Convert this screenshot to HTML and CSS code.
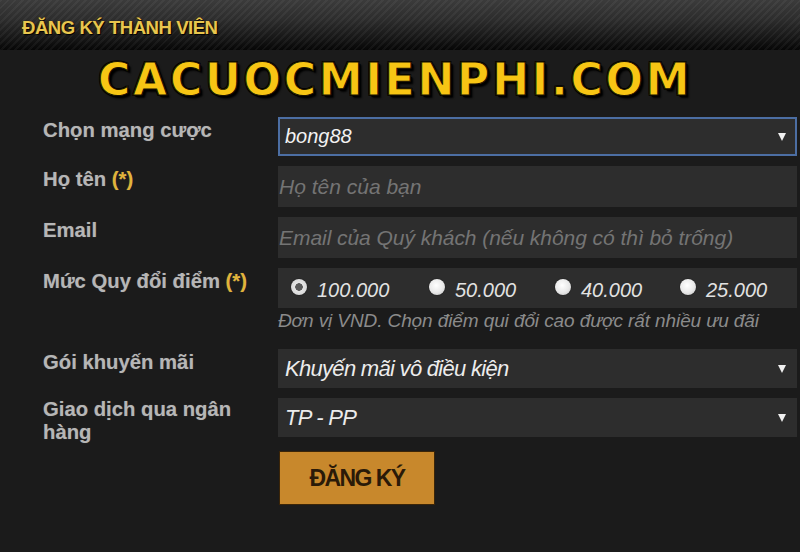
FILE: index.html
```html
<!DOCTYPE html>
<html lang="vi">
<head>
<meta charset="utf-8">
<title>Đăng ký thành viên</title>
<link rel="stylesheet" href="styles.css">
</head>
<body>
<div class="page">
  <div class="header">
    <h1 class="header-title">ĐĂNG KÝ THÀNH VIÊN</h1>
  </div>
  <div class="brand">CACUOCMIENPHI.COM</div>
  <form class="form">
    <div class="row">
      <label class="label">Chọn mạng cược</label>
      <div class="field select focused"><span class="value">bong88</span><span class="arrow"></span></div>
    </div>
    <div class="row">
      <label class="label">Họ tên <span class="req">(*)</span></label>
      <div class="field input"><span class="ph">Họ tên của bạn</span></div>
    </div>
    <div class="row">
      <label class="label">Email</label>
      <div class="field input"><span class="ph ph-email">Email của Quý khách (nếu không có thì bỏ trống)</span></div>
    </div>
    <div class="row">
      <label class="label">Mức Quy đổi điểm <span class="req">(*)</span></label>
      <div class="col">
        <div class="field radios">
          <span class="opt opt1"><span class="radio checked"></span>100.000</span>
          <span class="opt opt2"><span class="radio"></span>50.000</span>
          <span class="opt opt3"><span class="radio"></span>40.000</span>
          <span class="opt"><span class="radio"></span>25.000</span>
        </div>
        <div class="hint">Đơn vị VND. Chọn điểm qui đổi cao được rất nhiều ưu đãi</div>
      </div>
    </div>
    <div class="row row-promo">
      <label class="label">Gói khuyến mãi</label>
      <div class="field select short"><span class="value narrow">Khuyến mãi vô điều kiện</span><span class="arrow"></span></div>
    </div>
    <div class="row">
      <label class="label label-wrap">Giao dịch qua ngân hàng</label>
      <div class="field select short"><span class="value narrow">TP - PP</span><span class="arrow"></span></div>
    </div>
    <div class="row row-btn">
      <div class="label"></div>
      <button type="button" class="btn">ĐĂNG KÝ</button>
    </div>
  </form>
</div>
</body>
</html>
```
FILE: styles.css
```css
* { box-sizing: border-box; }
html, body { margin: 0; padding: 0; }
body {
  background: #1b1b1b;
  font-family: "Liberation Sans", Arial, sans-serif;
  width: 800px;
  height: 552px;
  overflow: hidden;
}
.page { width: 800px; height: 552px; background: #1b1b1b; }
.header {
  height: 50px;
  display: flex;
  align-items: center;
  padding-left: 22px;
  background:
    repeating-linear-gradient(135deg, rgba(255,255,255,0.045) 0 2px, rgba(0,0,0,0) 2px 5px),
    linear-gradient(180deg, #3b3b3b 0%, #2c2c2c 40%, #141414 80%, #060606 100%);
}
.header-title {
  margin: 0;
  padding-top: 6px;
  font-size: 18.6px;
  font-weight: bold;
  letter-spacing: -0.5px;
  color: #e9c64e;
  text-shadow: 1px 1px 1px #000, -1px 0 1px #3a2a00;
}
.brand {
  height: 60px;
  padding-left: 98px;
  padding-top: 5px;
  font-family: "DejaVu Sans", sans-serif;
  font-weight: bold;
  font-size: 44px;
  letter-spacing: 2.8px;
  color: #f7c514;
  -webkit-text-stroke: 1px #1a1300;
  text-shadow: 2px 2px 0 #000, -1px -1px 0 #000, 1px -1px 0 #000, -1px 1px 0 #000, 3px 3px 2px #000;
  line-height: 50px;
}
.form {
  margin: 0;
  padding: 7px 3px 0 43px;
  display: flex;
  flex-direction: column;
  gap: 10px;
}
.row { display: flex; align-items: flex-start; }
.label {
  width: 235px;
  flex: none;
  font-size: 20.3px;
  font-weight: bold;
  color: #b6b6b6;
  line-height: 23px;
  padding-top: 2px;
  text-shadow: 0 0 1px #555;
}
.label-wrap { padding-right: 30px; padding-top: 0; margin-bottom: -7px; }
.req { color: #e2b437; }
.field {
  width: 519px;
  height: 41px;
  background: #2d2d2d;
  display: flex;
  align-items: center;
  font-style: italic;
  font-size: 20px;
  position: relative;
}
.short { height: 39px; }
.select { padding: 0 11px 0 7px; justify-content: space-between; }
.focused { border: 2px solid #4c6ea3; height: 39px; padding-left: 5px; padding-right: 9px; }
.value { color: #f2f2f2; }
.narrow { font-size: 22px; letter-spacing: -0.7px; color: #ececec; }
.arrow {
  width: 0; height: 0;
  border-left: 4.5px solid transparent;
  border-right: 4.5px solid transparent;
  border-top: 8px solid #f0f0f0;
}
.input { padding-left: 1px; }
.ph { color: #747474; font-size: 21px; }
.ph-email { letter-spacing: -0.05px; }
.col { display: flex; flex-direction: column; }
.radios { padding-left: 13px; padding-top: 4px; color: #e2e2e2; height: 40px; }
.opt { display: flex; align-items: center; }
.opt1 { width: 138px; }
.opt2 { width: 126px; }
.opt3 { width: 125px; }
.radio {
  width: 16px; height: 16px;
  border-radius: 50%;
  margin-right: 10px;
  margin-top: -6px;
  background: radial-gradient(circle at 45% 40%, #ffffff 0%, #e8e8e8 55%, #bdbdbd 100%);
  box-shadow: 0 0 1px #000;
}
.radio.checked {
  background: radial-gradient(circle, #5a5a5a 0 3.5px, #e6e6e6 4px, #cfcfcf 100%);
}
.hint {
  margin-top: 2px;
  font-size: 19px;
  font-style: italic;
  color: #8b8b8b;
  letter-spacing: -0.1px;
  line-height: 22px;
}
.row-promo { margin-top: 7px; }
.row-btn { margin-top: 4px; }
.btn {
  width: 156px;
  height: 54px;
  margin-left: 1px;
  background: #c8882c;
  border: 1px solid #3b2508;
  font-family: "Liberation Sans", Arial, sans-serif;
  font-weight: bold;
  font-size: 23px;
  color: #2a1a08;
  letter-spacing: -1.6px;
  padding: 0;
}
```
